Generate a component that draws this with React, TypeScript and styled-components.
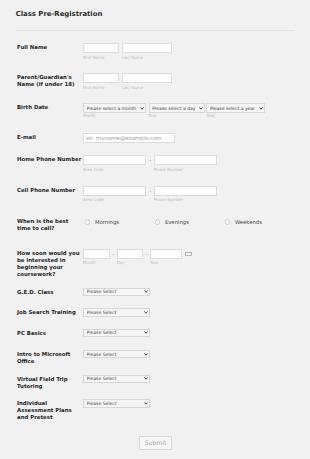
import React from "react";
import styled, { createGlobalStyle } from "styled-components";

const GlobalStyle = createGlobalStyle`
  html, body { margin: 0; padding: 0; background: #f1f1f1; }
  body { font-family: "DejaVu Sans", Verdana, sans-serif; }
  * { box-sizing: border-box; }
`;

const Page = styled.div`
  padding: 10px 16px 0 15px;
`;

const Header = styled.header`
  border-bottom: 1px solid #e3e3e3;
  padding-bottom: 11px;
`;

const Title = styled.h1`
  margin: 0;
  padding-left: 0.7px;
  font-size: 6.9px;
  line-height: 9px;
  font-weight: bold;
  color: #2b2b2b;
`;

const Form = styled.form`
  padding: 12.3px 0 0 2px;
`;

const Row = styled.div<{ $h: number }>`
  display: flex;
  align-items: flex-start;
  height: ${(p) => p.$h}px;
`;

const Label = styled.label`
  flex: 0 0 66px;
  padding-top: 1px;
  font-size: 5.4px;
  line-height: 7px;
  font-weight: bold;
  color: #262626;
  white-space: nowrap;
`;

const Controls = styled.div`
  display: flex;
  align-items: flex-start;
`;

const Field = styled.div<{ $gap?: number }>`
  display: flex;
  flex-direction: column;
  margin-right: ${(p) => p.$gap ?? 0}px;
`;

const Sub = styled.span<{ $mt?: number }>`
  margin-top: ${(p) => p.$mt ?? 2.3}px;
  font-size: 4px;
  line-height: 4px;
  color: #b9b9b9;
`;

const TextBox = styled.input<{ $w: number; $h?: number }>`
  display: block;
  width: ${(p) => p.$w}px;
  height: ${(p) => p.$h ?? 10}px;
  margin: 0;
  padding: 0 2px;
  border: 1px solid #dadada;
  border-radius: 0;
  background: #fff;
  font-family: inherit;
  font-size: 5.4px;
  color: #444;
  outline: none;
  &::placeholder { color: #9c9c9c; }
`;

const Dash = styled.span<{ $w: number }>`
  width: ${(p) => p.$w}px;
  height: 10px;
  font-size: 5px;
  line-height: 10px;
  text-align: center;
  color: #666;
`;

const SelectWrap = styled.div<{ $w: number; $h: number }>`
  position: relative;
  width: ${(p) => p.$w}px;
  height: ${(p) => p.$h}px;
  line-height: 0;
`;

const Select = styled.select`
  display: block;
  appearance: none;
  -webkit-appearance: none;
  width: 100%;
  height: 100%;
  margin: 0;
  padding: 0 0 0 2.6px;
  border: 1px solid #d7d7d7;
  border-radius: 0;
  background: #f5f5f5;
  font-family: inherit;
  font-size: 4.5px;
  line-height: normal;
  color: #444;
  outline: none;
`;

const Chevron = styled.svg`
  position: absolute;
  right: 2px;
  top: 50%;
  width: 4px;
  height: 3px;
  margin-top: -1.5px;
  pointer-events: none;
`;

const Radios = styled.div`
  display: flex;
  padding-top: 1px;
`;

const Option = styled.label`
  display: flex;
  align-items: center;
  gap: 5px;
  width: 70px;
  height: 7px;
  padding-left: 1.5px;
  font-size: 5.3px;
  color: #454545;
`;

const Radio = styled.input`
  appearance: none;
  -webkit-appearance: none;
  width: 5.4px;
  height: 5.4px;
  margin: 1px 0 0;
  border: 1px solid #cacaca;
  border-radius: 50%;
  background: #fff;
`;

const CalIcon = styled.svg`
  margin: 3px 0 0 2.6px;
  width: 7px;
  height: 4px;
`;

const SubmitBar = styled.div`
  display: flex;
  justify-content: center;
`;

const Submit = styled.button`
  width: 33px;
  height: 14px;
  padding: 0;
  border: 1px solid #d8d8d8;
  border-radius: 1px;
  background: #f7f7f7;
  font-family: inherit;
  font-size: 6.1px;
  color: #a3a3a3;
`;

const Pick = ({ w, h, text }: { w: number; h: number; text: string }) => (
  <SelectWrap $w={w} $h={h}>
    <Select defaultValue="">
      <option value="">{text}</option>
    </Select>
    <Chevron viewBox="0 0 8 6">
      <polyline points="1,1 4,4.5 7,1" fill="none" stroke="#333" strokeWidth="1.8" />
    </Chevron>
  </SelectWrap>
);

const courses: { label: React.ReactNode; h: number }[] = [
  { label: "G.E.D. Class", h: 20.6 },
  { label: "Job Search Training", h: 20.4 },
  { label: "PC Basics", h: 21.3 },
  { label: <>Intro to Microsoft<br />Office</>, h: 24.7 },
  { label: <>Virtual Field Trip<br />Tutoring</>, h: 24.6 },
  { label: <>Individual<br />Assessment Plans<br />and Pretest</>, h: 36.7 },
];

export default function App() {
  return (
    <>
      <GlobalStyle />
      <Page>
        <Header>
          <Title>Class Pre-Registration</Title>
        </Header>
        <Form onSubmit={(e) => e.preventDefault()}>
          <Row $h={30}>
            <Label>Full Name</Label>
            <Controls>
              <Field $gap={2.7}>
                <TextBox $w={36} />
                <Sub>First Name</Sub>
              </Field>
              <Field>
                <TextBox $w={50.3} />
                <Sub>Last Name</Sub>
              </Field>
            </Controls>
          </Row>

          <Row $h={30}>
            <Label>Parent/Guardian's<br />Name (if under 18)</Label>
            <Controls>
              <Field $gap={2.7}>
                <TextBox $w={36} />
                <Sub $mt={2.7}>First Name</Sub>
              </Field>
              <Field>
                <TextBox $w={50.3} />
                <Sub $mt={2.7}>Last Name</Sub>
              </Field>
            </Controls>
          </Row>

          <Row $h={29.4}>
            <Label>Birth Date</Label>
            <Controls>
              <Field $gap={2.6}>
                <Pick w={63} h={10} text="Please select a month" />
                <Sub $mt={1}>Month</Sub>
              </Field>
              <Field $gap={1.3}>
                <Pick w={56.4} h={10} text="Please select a day" />
                <Sub $mt={1}>Day</Sub>
              </Field>
              <Field>
                <Pick w={59} h={10} text="Please select a year" />
                <Sub $mt={1}>Year</Sub>
              </Field>
            </Controls>
          </Row>

          <Row $h={22.6}>
            <Label>E-mail</Label>
            <Controls>
              <TextBox $w={92.3} $h={10.6} placeholder="ex: myname@example.com" />
            </Controls>
          </Row>

          <Row $h={30.7}>
            <Label>Home Phone Number</Label>
            <Controls>
              <Field>
                <TextBox $w={63.4} />
                <Sub $mt={2.7}>Area Code</Sub>
              </Field>
              <Dash $w={7.3}>-</Dash>
              <Field>
                <TextBox $w={63.7} />
                <Sub $mt={2.7}>Phone Number</Sub>
              </Field>
            </Controls>
          </Row>

          <Row $h={31.2}>
            <Label>Cell Phone Number</Label>
            <Controls>
              <Field>
                <TextBox $w={63.4} $h={10.3} />
                <Sub $mt={1.7}>Area Code</Sub>
              </Field>
              <Dash $w={7.3}>-</Dash>
              <Field>
                <TextBox $w={63.7} $h={10.3} />
                <Sub $mt={1.7}>Phone Number</Sub>
              </Field>
            </Controls>
          </Row>

          <Row $h={32.1}>
            <Label>When is the best<br />time to call?</Label>
            <Radios>
              <Option><Radio type="radio" name="t" />Mornings</Option>
              <Option><Radio type="radio" name="t" />Evenings</Option>
              <Option><Radio type="radio" name="t" />Weekends</Option>
            </Radios>
          </Row>

          <Row $h={38.4}>
            <Label>How soon would you<br />be interested in<br />beginning your<br />coursework?</Label>
            <Controls>
              <Field>
                <TextBox $w={26.7} />
                <Sub $mt={2}>Month</Sub>
              </Field>
              <Dash $w={7}>-</Dash>
              <Field>
                <TextBox $w={26.7} />
                <Sub $mt={2}>Day</Sub>
              </Field>
              <Dash $w={6.6}>-</Dash>
              <Field>
                <TextBox $w={32.4} />
                <Sub $mt={2}>Year</Sub>
              </Field>
              <CalIcon viewBox="0 0 7 4">
                <rect x="0.5" y="0.5" width="6" height="3" fill="#f4f4f4" stroke="#a9a9a9" strokeWidth="0.8" />
              </CalIcon>
            </Controls>
          </Row>

          {courses.map((c, i) => (
            <Row key={i} $h={c.h}>
              <Label>{c.label}</Label>
              <Controls>
                <Pick w={67.4} h={8.5} text="Please Select" />
              </Controls>
            </Row>
          ))}

          <SubmitBar>
            <Submit type="submit">Submit</Submit>
          </SubmitBar>
        </Form>
      </Page>
    </>
  );
}
